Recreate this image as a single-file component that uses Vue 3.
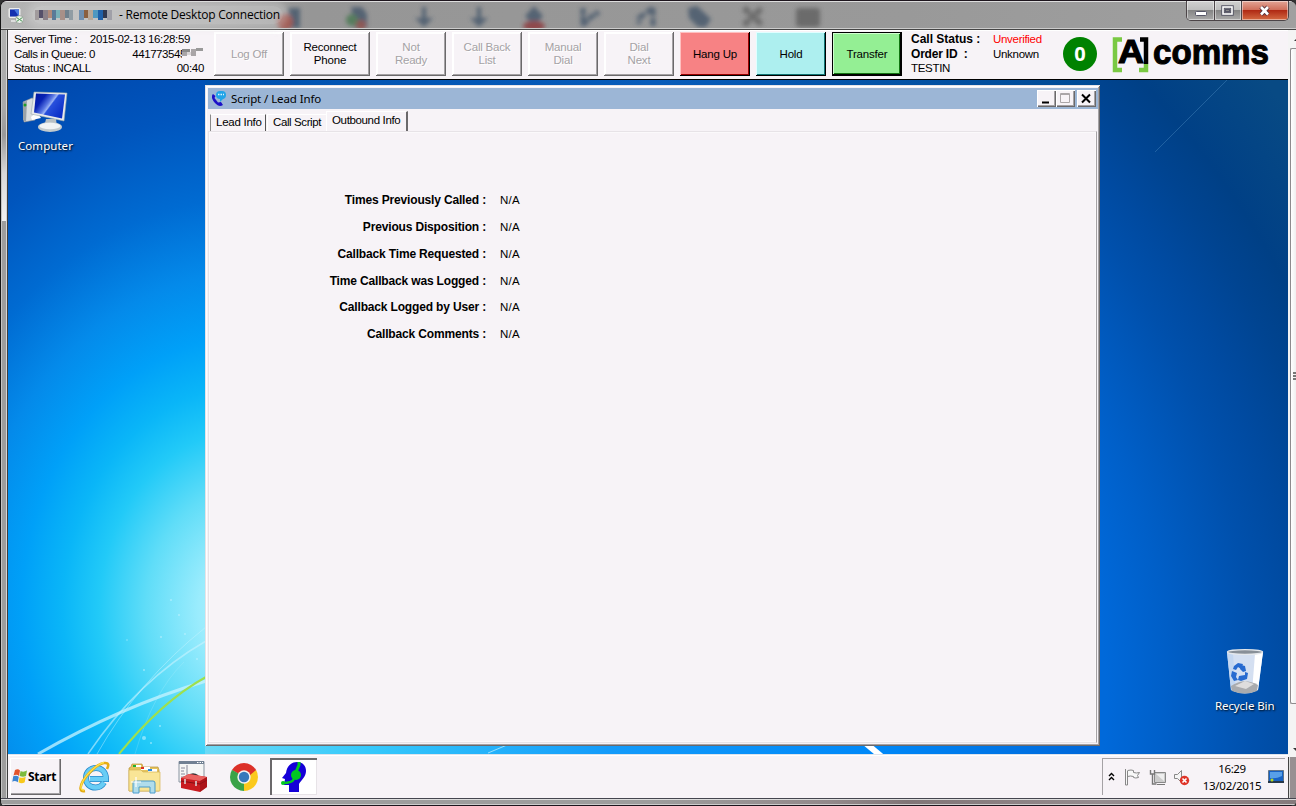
<script setup>
const buttons = [
  { lines: ['Log Off'], kind: 'off' },
  { lines: ['Reconnect', 'Phone'], kind: 'wide' },
  { lines: ['Not', 'Ready'], kind: 'off' },
  { lines: ['Call Back', 'List'], kind: 'off' },
  { lines: ['Manual', 'Dial'], kind: 'off' },
  { lines: ['Dial', 'Next'], kind: 'off' },
  { lines: ['Hang Up'], kind: 'red' },
  { lines: ['Hold'], kind: 'cyan' },
  { lines: ['Transfer'], kind: 'green' },
]
const rows = [
  'Times Previously Called :',
  'Previous Disposition :',
  'Callback Time Requested :',
  'Time Callback was Logged :',
  'Callback Logged by User :',
  'Callback Comments :',
]
const mosaicA = ['#a09a9c', '#55506a', '#8a8088', '#b08a7a', '#5a7a98', '#78b0b8', '#a89088', '#70808c', '#909ca4']
const mosaicB = ['#7090b0', '#8a6040', '#b8a898', '#5098c0', '#2060a8', '#303850', '#a0a0a8']
</script>

<template>
  <div class="frame">
    <header class="title">
      <svg class="blobs" width="1296" height="28" viewBox="0 0 1296 28">
        <defs><filter id="soft" x="-50%" y="-50%" width="200%" height="200%"><feGaussianBlur stdDeviation="2.2" /></filter></defs>
        <g filter="url(#soft)" fill="#45566a" stroke="none">
          <path d="M288 8h12v20h-10z" /><circle cx="285" cy="22" r="8" fill="#a04840" />
          <path d="M351 7h11l5 7v14h-12z" /><circle cx="352" cy="20" r="6" fill="#47774f" /><circle cx="361" cy="25" r="5" fill="#8c4a44" />
          <path d="M422 7h4v11h7l-9 9-9-9h7zM477 7h4v11h7l-9 9-9-9h7z" />
          <path d="M525 16l9-10 9 10-4 5h-10z" /><ellipse cx="534" cy="26" rx="11" ry="5" fill="#8c3438" />
          <g fill="none" stroke="#45566a" stroke-width="5"><path d="M583 8v18M583 25l8-8 8-5" stroke-dasharray="7 1" /><path d="M653 8l-14 10v6M653 8v18" stroke-dasharray="8 2" /></g>
          <path d="M688 8l9-2 14 13-5 8h-8l-9-9z" />
          <g fill="none" stroke="#606060" stroke-width="6"><path d="M744 8l18 17M744 25l18-17" stroke-dasharray="7 1" /></g>
          <rect x="796" y="8" width="24" height="19" rx="3" fill="#606060" />
        </g>
      </svg>
      <svg class="rdp" width="16" height="16" viewBox="0 0 16 16">
        <rect x="1" y="0.500" width="11" height="9" rx="1" fill="#ddd" stroke="#eee" /><rect x="2" y="1.500" width="9" height="7" fill="#1430b0" /><path d="M6 1.500h5v7z" fill="#4878e0" />
        <path d="M3 12h6v2H3z" fill="#ddd" /><circle cx="11.500" cy="11.500" r="4" fill="#e8f0e8" stroke="#777" stroke-width=".5" /><path d="M9 9.500l2 2-2 2M14 9.500l-2 2 2 2" fill="none" stroke="#187828" />
      </svg>
      <div class="glow">
        <span class="mosaic"><i v-for="(c, i) in mosaicA" :key="i" :style="{ background: c }" /></span>
        <span class="mosaic second"><i v-for="(c, i) in mosaicB" :key="i" :style="{ background: c }" /></span>
        <span class="caption">- Remote Desktop Connection</span>
      </div>
      <div class="aero">
        <div class="ab min"><svg width="14" height="8"><rect x="1.500" y="2.500" width="11" height="4" rx="1" fill="#fff" stroke="#555566" /></svg></div>
        <div class="ab max"><svg width="14" height="12"><rect x="2" y="2" width="9" height="7" fill="none" stroke="#555566" stroke-width="3.500" /><rect x="2" y="2" width="9" height="7" fill="none" stroke="#fff" stroke-width="1.600" /><rect x="4.500" y="4.500" width="4" height="2" fill="#888" stroke="#555566" /></svg></div>
        <div class="ab close"><svg width="14" height="12"><path d="M3 2l7 7.500M10 2L3 9.500" stroke="#55313a" stroke-width="4.500" /><path d="M3 2l7 7.500M10 2L3 9.500" stroke="#fff" stroke-width="2.600" /></svg></div>
      </div>
    </header>

    <div class="middle">
      <div class="edge"><div class="edge-light" /></div>
      <main class="screen">
        <section class="toolbar">
          <div class="server">
            <div class="line"><span class="t1">Server Time :</span><span class="stamp">2015-02-13 16:28:59</span></div>
            <div class="line"><span class="t2">Calls in Queue: 0</span><span class="phone">441773545<svg width="23" height="10" viewBox="0 0 23 10"><path d="M0 1h8v3H0z" fill="#8a8a8a" /><path d="M0 4h5v4H0zM9 1h5v7H9z" fill="#a9a5a7" /><path d="M14 0h7v3h-7z" fill="#999" /><path d="M5 4h4v3H5z" fill="#d9d5d7" /></svg></span></div>
            <div class="line"><span class="t3">Status : INCALL</span><span class="timer">00:40</span></div>
          </div>
          <div class="buttons">
            <button v-for="b in buttons" :key="b.lines[0]" class="btn" :class="b.kind"><span v-for="l in b.lines" :key="l">{{ l }}</span></button>
          </div>
          <div class="status">
            <div class="line"><b class="s1">Call Status :</b><span class="unverified">Unverified</span></div>
            <div class="line"><b class="s2">Order ID &nbsp;:</b><span>Unknown</span></div>
            <div class="line">TESTIN</div>
          </div>
          <div class="count">0</div>
          <svg class="logo" width="164" height="48" viewBox="0 -7 164 48">
            <path d="M9 2.500H2V33h7" fill="none" stroke="#7ac943" stroke-width="4.500" />
            <path d="M27 2.500h6V27" fill="none" stroke="#000" stroke-width="4.500" />
            <path d="M26 33h7V27" fill="none" stroke="#7ac943" stroke-width="4.500" />
            <text x="5" y="26" font-size="34" textLength="26" lengthAdjust="spacingAndGlyphs" stroke="#000" stroke-width="1.200">A</text>
            <text x="40" y="26.500" font-size="35" textLength="116" lengthAdjust="spacingAndGlyphs" stroke="#000" stroke-width="1.100">comms</text>
          </svg>
        </section>

        <section class="desktop">
          <svg class="wallpaper" width="1280" height="674" viewBox="0 0 1280 674">
            <defs>
              <radialGradient id="far" gradientUnits="userSpaceOnUse" cx="0" cy="0" r="1240" gradientTransform="translate(242 620) scale(1 .87)">
                <stop offset=".69" stop-color="#0069da" /><stop offset=".74" stop-color="#005fc8" /><stop offset=".81" stop-color="#0050ac" /><stop offset=".845" stop-color="#004aa0" /><stop offset=".885" stop-color="#004491" /><stop offset=".92" stop-color="#004086" /><stop offset="1" stop-color="#084a84" />
              </radialGradient>
              <radialGradient id="near" gradientUnits="userSpaceOnUse" cx="0" cy="0" r="520" gradientTransform="translate(242 530) scale(1 1.2)">
                <stop offset="0" stop-color="#b8f4ff" /><stop offset=".1" stop-color="#9aecfd" /><stop offset=".2" stop-color="#60ddf8" /><stop offset=".29" stop-color="#22caf8" /><stop offset=".36" stop-color="#0ab6f8" /><stop offset=".44" stop-color="#00a0f8" /><stop offset=".54" stop-color="#048aea" /><stop offset=".66" stop-color="#006bd2" /><stop offset=".8" stop-color="#0055bd" /><stop offset="1" stop-color="#0042a6" />
              </radialGradient>
              <linearGradient id="low"><stop offset="0" stop-color="#6bdaf6" /><stop offset=".18" stop-color="#36c9fb" /><stop offset=".45" stop-color="#149bfa" /><stop offset=".75" stop-color="#0088f8" /><stop offset="1" stop-color="#0066d8" /></linearGradient>
              <linearGradient id="high"><stop offset="0" stop-color="#0052b0" /><stop offset=".5" stop-color="#085cba" /><stop offset="1" stop-color="#004a94" /></linearGradient>
              <filter id="haze" x="-10%" y="-10%" width="120%" height="120%"><feGaussianBlur stdDeviation=".7" /></filter>
            </defs>
            <rect width="1280" height="674" fill="url(#far)" />
            <rect width="500" height="674" fill="url(#near)" />
            <rect x="197" width="895" height="6" fill="url(#high)" />
            <rect x="197" y="664" width="895" height="10" fill="url(#low)" />
            <g fill="none" stroke="#c9f4ff">
              <path d="M30 674Q112 627 198 601" stroke-width="3" filter="url(#haze)" opacity=".75" />
              <path d="M80 674Q130 600 198 561" stroke-width="1.500" opacity=".6" />
              <path d="M89 674Q130 601 198 547" stroke-width="1" opacity=".45" />
              <path d="M127 674Q145 612 176 582" stroke-width="1" opacity=".2" />
              <path d="M111 674Q154 621 198 597" stroke="#9ee04d" stroke-width="2" />
              <path d="M480 673l19-8" opacity=".7" />
              <path d="M855 661l18 15" stroke="#fff" stroke-width="6" filter="url(#haze)" />
              <path d="M1219 0l-72 72" stroke="#4080b8" opacity=".5" />
            </g>
            <g fill="#c5f3ff" opacity=".6"><circle cx="136" cy="590" r="1" /><circle cx="153" cy="557" r="1" /><circle cx="119" cy="560" r=".8" /><circle cx="136" cy="658" r="2" /><circle cx="152" cy="646" r="1" /><circle cx="143" cy="663" r="1" /><circle cx="189" cy="579" r="1" /><circle cx="177" cy="554" r="1" /><circle cx="171" cy="535" r="1" /><circle cx="163" cy="520" r="1" /></g>
          </svg>

          <div class="shortcut computer">
            <svg width="48" height="44" viewBox="0 0 48 44">
              <defs><linearGradient id="scr" x2="1" y2=".6"><stop offset="0" stop-color="#0018a0" /><stop offset=".3" stop-color="#0822b4" /><stop offset=".5" stop-color="#5a78e4" /><stop offset=".58" stop-color="#9cb4f4" /><stop offset=".62" stop-color="#2850dc" /><stop offset="1" stop-color="#0c30c8" /></linearGradient></defs>
              <path d="M2 11l9-4 6 3-3 19-11 2z" fill="#d9dde0" stroke="#999" stroke-width=".6" /><path d="M2 11l4-1-1 21-3-2z" fill="#9aa2a8" /><circle cx="4" cy="14" r="1.500" fill="#1c9c28" />
              <path d="M10 26l6-5 4 6-9 2z" fill="#fff" />
              <path d="M25 28h10l1 8H23z" fill="#b8c0c4" /><ellipse cx="29" cy="36" rx="12" ry="5" fill="#c2cacd" /><ellipse cx="29" cy="35" rx="10.500" ry="3.300" fill="#f0f3f4" />
              <path d="M13 1l33 1-3 28-33-7z" fill="#e8eaec" stroke="#9aa" stroke-width=".6" /><path d="M15 2.500l29 1-3 24-28-6z" fill="url(#scr)" />
            </svg>
            <span>Computer</span>
          </div>

          <div class="shortcut recycle">
            <svg width="38" height="48" viewBox="0 0 38 48">
              <path d="M1 4l4 38q14 7 27 0l5-38z" fill="#e4ebf6" fill-opacity=".93" /><path d="M1 4l4 38 5 2L7 6z" fill="#c3d7f1" /><path d="M29 6l-3 38 6-2 5-38z" fill="#fff" /><path d="M5 38q13-9 27-1l-1 6q-12 5-25 0z" fill="#a9abae" /><path d="M9 38l10-5 9 3-8 5z" fill="#dedddd" />
              <ellipse cx="19" cy="4" rx="17.500" ry="2.400" fill="#889098" stroke="#e4e8ec" stroke-width="1.400" />
              <g fill="#276bd0"><path d="M8 18l4-3 5 1-2 5-3-2-2 3-3-1z" /><path d="M6 23l5 2-1 4 2 3-4 1-3-5z" /><path d="M13 28l6-1v-3l3 1-1 6-6 2-3-1z" /><path d="M15 17l4 1 1 5-3 1-3-3z" /></g>
            </svg>
            <span>Recycle Bin</span>
          </div>

          <div class="window">
            <div class="wtitle">
              <svg width="18" height="18" viewBox="0 0 18 18"><rect x="6" y="1" width="10" height="8" rx="4" fill="#20a4e8" /><path d="M10 8v4l4-4z" fill="#20a4e8" /><path d="M8 4.500h6" stroke="#d8f4ff" stroke-width="1.500" stroke-dasharray="1.500 1" /><path d="M3 4c-2 2-1 6 2 9s5 4 8 2l-2-3-3 .5L4.500 8 5.500 6z" fill="#1c10c8" /></svg>
              <span>Script / Lead Info</span>
              <div class="wbtns">
                <i class="wb"><svg width="16" height="15"><path d="M5 12.500h7" stroke="#000" stroke-width="2" /></svg></i>
                <i class="wb"><svg width="16" height="15"><path d="M4.500 3.500h9v9h-9zM4 4.500h10" fill="none" stroke="#aaa6a8" /></svg></i>
                <i class="wb last"><svg width="18" height="15"><path d="M5 4.500l8 8M13 4.500l-8 8" stroke="#000" stroke-width="2" /></svg></i>
              </div>
            </div>
            <nav class="tabs"><span class="tab lead">Lead Info</span><span class="tab script">Call Script</span><span class="tab active">Outbound Info</span></nav>
            <div class="pane">
              <div v-for="r in rows" :key="r" class="row"><b>{{ r }}</b><span>N/A</span></div>
            </div>
          </div>
        </section>

        <footer class="taskbar">
          <div class="start">
            <svg width="16" height="15" viewBox="0 0 16 15"><path d="M3 1q3-1.500 5 .5L7 7Q5 5 1.500 6.500z" fill="#e2542c" /><path d="M8.600 2q3 1.500 6.400-.5L14 7q-3 1.500-6.400 0z" fill="#7cba3c" /><path d="M1.200 7.300q3-1.500 5.600.4l-1 5.500q-3-2-5.500-.5z" fill="#3c84d0" /><path d="M7.500 8.200q3 1.500 6.200-.4l-1 5.500q-3 2-6.200 0z" fill="#f8c81c" /></svg>
            <b>Start</b>
          </div>
          <div class="apps">
            <svg class="ie" width="32" height="32" viewBox="0 0 32 32">
              <path d="M25 21.500q-3 5-8.500 5c-6 0-9.500-4-9.500-9.500S11 7 17 7s10 4.500 10 11H11" fill="none" stroke="#2788ca" stroke-width="6" /><path d="M25 21.500q-3 5-8.500 5c-6 0-9.500-4-9.500-9.500S11 7 17 7s10 4.500 10 11H11" fill="none" stroke="#68cdf5" stroke-width="4.400" />
              <path d="M6 30c-5 1-6-3-2-10S18 3 25 2c5-.5 5 2 3 6" fill="none" stroke="#e5ac14" stroke-width="2.600" /><path d="M5 29c-4 0-4-4-.5-10S18 3 25 1.500" fill="none" stroke="#ffe14a" stroke-width="1.300" />
            </svg>
            <svg class="folder" width="33" height="32" viewBox="0 0 33 32">
              <path d="M3 5l1-3h10l1 3h15l1 3v21H1V6z" fill="#e5c35e" stroke="#b89438" stroke-width=".7" /><path d="M5 3h8v2H5z" fill="#fff" /><path d="M5 3h3v2H5z" fill="#20b030" /><path d="M13 5h9v3h-9z" fill="#fff" /><path d="M13 5h3v2h-3z" fill="#e03020" /><path d="M20 7h9v3h-9z" fill="#fff" /><path d="M20 7h4v2h-4z" fill="#2888e0" /><path d="M1 8h12l2 2h17v19H1z" fill="#f9e596" stroke="#d6b455" stroke-width=".7" />
              <path d="M5 31V21q0-2 2-2h18q2 0 2 2v10h-5v-6H11v6z" fill="#a7dcf4" fill-opacity=".9" stroke="#4a9bc8" /><path d="M8 15v10M3 20h10" stroke="#fff" stroke-width="1.200" />
            </svg>
            <svg class="tools" width="30" height="33" viewBox="0 0 30 33">
              <path d="M1 1.500h25V22H1z" fill="#f5f5f5" stroke="#8994a0" /><path d="M1 1h25v3H1z" fill="#718093" /><path d="M19 2.500h6" stroke="#fff" stroke-dasharray="1.500 1" /><path d="M3 8h4M3 11h3M3 14h4M3 17h3M9 5v12" stroke="#889" />
              <path d="M10 17q4-5 10-1" fill="none" stroke="#333" stroke-width="2" /><path d="M3 18l8-4 18 3v10l-7 5-19-4z" fill="#c91b20" /><path d="M3 18l8-4 18 3-7 4z" fill="#ea6260" /><path d="M3 21l19 3 7-4" fill="none" stroke="#851015" /><path d="M7 19v5M18 21v5" stroke="#ddd" stroke-width="1.500" /><path d="M22 21v11l7-5V17z" fill="#991016" opacity=".6" />
            </svg>
            <svg class="chrome" width="30" height="30" viewBox="0 0 30 30">
              <path d="M15 15L2.900 8A14 14 0 0 1 27.100 8z" fill="#dc3028" /><path d="M15 15L27.100 8A14 14 0 0 1 15 29z" fill="#fbc91c" /><path d="M15 15v14A14 14 0 0 1 2.900 8z" fill="#3ba348" /><path d="M15 8h12.100L20 14z" fill="#dc3028" /><path d="M20 15l-5 14 2-8z" fill="#fbc91c" /><path d="M2.900 8L9 18l3-5z" fill="#3ba348" /><circle cx="15" cy="15" r="6.700" fill="#f2f2f2" /><circle cx="15" cy="15" r="5.200" fill="#3678bb" />
            </svg>
            <div class="agent"><svg width="30" height="32" viewBox="0 0 30 32">
              <path d="M10 31v-7H5l1-6-3-1 4-5C8 5 12 1 18 1s9 4 9 9c0 6-5 9-7 13v8z" fill="#1500d8" /><path d="M20 1v3l-3 7" stroke="#00c820" stroke-width="3" fill="none" /><circle cx="17" cy="14" r="5" fill="#00c820" /><path d="M15 18q-2 4-11 4" stroke="#00c820" stroke-width="2.500" fill="none" /><circle cx="4" cy="22" r="2" fill="#00c820" />
            </svg></div>
          </div>
          <div class="tray">
            <svg class="chev" width="7" height="10"><path d="M1 4l2.500-2.500L6 4M1 8l2.500-2.500L6 8" stroke="#000" fill="none" stroke-width="1.400" /></svg>
            <svg class="flag" width="18" height="18"><path d="M1.500 1v16h2V3M3.500 2.500q4-1 6 0v2q3 1 6 0l-2 3 1 2q-3 1-5 0v-1q-3-1-6 0" fill="#f8f8f8" stroke="#888" /></svg>
            <svg class="net" width="18" height="17"><path d="M5.500 3.500h11v10h-11z" fill="#ccc" stroke="#888" /><path d="M7 5h8v7z" fill="#eee" /><path d="M8 15.500h8" stroke="#777" /><path d="M1.500 1v4h4V1M3.500 5v10h4" fill="none" stroke="#777" stroke-width="1.400" /></svg>
            <svg class="vol" width="18" height="17"><path d="M1.500 5.500h3l4-4v12l-4-4h-3z" fill="#f5f5f5" stroke="#888" /><circle cx="11.500" cy="11.500" r="4.700" fill="#df3428" /><path d="M9.500 9.500l4 4M13.500 9.500l-4 4" stroke="#fff" stroke-width="1.600" /></svg>
            <div class="clock"><span class="time">16:29</span><span class="date">13/02/2015</span></div>
            <svg class="mon" width="16" height="14"><path d="M.5.500h15v11H.5z" fill="#1762c4" stroke="#678" /><path d="M2 2h12v4q-6 3-12 2z" fill="#58a0e8" /><path d="M0 11h16v2H0z" fill="#283848" /><circle cx="4" cy="10" r="1.500" fill="#b8d820" /></svg>
          </div>
        </footer>
      </main>
      <aside class="scroll">
        <div class="up" /><div class="thumb"><i /><i /><i /></div><div class="down" /><div class="rest" />
      </aside>
    </div>
    <div class="bottom" />
  </div>
</template>

<style>
body { margin: 0; overflow: hidden; background: #333; }
</style>
<style scoped>
* { box-sizing: border-box; }
svg { display: block; flex: none; }
.frame { width: 1296px; height: 806px; display: flex; flex-direction: column; background: #9d9d9d; border-top: 1px solid #1d151d; border-left: 1px solid #151515; border-radius: 7px 7px 5px 5px; overflow: hidden; font: 11.5px/14px "Liberation Sans", Arial, sans-serif; letter-spacing: -.3px; color: #000; }
.title { height: 29px; position: relative; display: flex; border-top: 1px solid #ddd; border-bottom: 1px solid #454545; background: linear-gradient(90deg, #b4b4b4, #a8a8a8 15%, #969696 24%, #999 70%, #a0a0a0); box-shadow: inset 0 -1px #ccc; flex: none; }
.blobs { position: absolute; left: -1px; top: -2px; opacity: .8; }
.rdp { margin: 6px 0 0 7px; }
.glow { position: relative; display: flex; margin: 4px 0 4px 8px; padding: 0 3px; height: 18px; border-radius: 9px; align-items: center; background: rgba(225, 225, 225, .38); box-shadow: 0 0 7px 5px rgba(220, 220, 220, .35); }
.mosaic { display: flex; width: 38px; height: 10px; filter: blur(.4px); }
.mosaic i { flex: 1; }
.mosaic i:nth-child(even) { height: 8px; }
.second { margin-left: 6px; width: 33px; }
.caption { margin-left: 7px; font: 12px/18px "Open Sans", sans-serif; letter-spacing: -.22px; white-space: nowrap; }
.aero { position: relative; display: flex; margin-left: auto; margin-right: 7px; height: 20px; border: 1px solid #4c4548; border-top: 0; border-radius: 0 0 5px 5px; overflow: hidden; width: 103px; margin-top: -1px; }
.ab { display: flex; align-items: center; justify-content: center; background: linear-gradient(#d0d0d0, #bebebe 45%, #858585 50%, #aaa); box-shadow: inset 0 0 0 1px rgba(255, 255, 255, .45); border-right: 1px solid #4c4548; }
.min, .max { width: 28px; }
.min { padding-top: 4px; }
.max { width: 27px; }
.close { flex: 1; border: 0; background: linear-gradient(#e3a596, #d0705c 45%, #b02a14 50%, #d46a42); }
.middle { flex: 1; display: flex; min-height: 0; }
.edge { width: 7px; border-right: 1px solid #3d3d3d; background: #9d9d9d; box-shadow: inset 1px 0 #c4c4c4, inset -1px 0 #d5d5d5; flex: none; }
.edge-light { height: 191px; margin-right: 1px; margin-left: 1px; background: linear-gradient(#b0b0b0, #aaa 40%, #999 55%, #d8d8d8 75%, #f2f2f2); }
.screen { width: 1280px; display: flex; flex-direction: column; flex: none; }
.toolbar { height: 50px; display: flex; background: #f7f3f7; border-bottom: 1px solid #000; border-top: 1px solid #fff; flex: none; }
.server { width: 197px; margin: 1px 0 0 6px; }
.line { display: flex; height: 14.500px; align-items: center; white-space: nowrap; }
.stamp { margin-left: auto; margin-right: 14px; letter-spacing: -.35px; }
.phone, .timer { margin-left: auto; display: flex; }
.phone { letter-spacing: -.42px; }
.phone svg { margin-left: -4px; background: #f7f3f7; height: 10px; margin-top: 1px; }
.server .line { width: 190px; }
.server .line:nth-child(2) { width: 191px; }
.server .t1 { letter-spacing: -.4px; }
.server .t2 { letter-spacing: -.42px; }
.server .t3 { letter-spacing: -.38px; }
.buttons { display: flex; gap: 6px; margin: 1px 0 0 3px; }
.btn { width: 70px; height: 44px; padding: 0; border: 0; border-radius: 0; display: flex; flex-direction: column; align-items: center; justify-content: center; font: inherit; line-height: 13px; letter-spacing: -.2px; color: #000; background: #f7f3f7; box-shadow: inset -1px -1px #6b696b, inset 1px 1px #fff, inset -2px -2px #a5a2a5, inset 2px 2px #fff; }
.wide { width: 80px; }
.off { color: #a5a2a5; text-shadow: 1px 1px #fff; }
.red { background: #f78284; box-shadow: inset -1px -1px #000, inset 1px 1px #ffc0c0, inset -2px -2px #9c0000; }
.cyan { background: #adefef; box-shadow: inset -1px -1px #000, inset 1px 1px #e0ffff, inset -2px -2px #107474; }
.green { background: #94ef94; border: 1px solid #000; box-shadow: inset -1px -1px #000, inset 1px 1px #d0ffd0, inset -2px -2px #107410; }
.status { width: 150px; margin: 1px 0 0 9px; }
.status b { width: 82px; font-size: 12px; letter-spacing: 0; }
.status .s2 { letter-spacing: -.2px; }
.unverified { color: #f00; }
.count { width: 34px; height: 34px; margin: 6px 0 0 2px; border-radius: 50%; background: #008200; color: #fff; font: bold 20px/33px "Open Sans", sans-serif; text-align: center; flex: none; letter-spacing: 0; }
.logo { margin: -1px 0 0 16px; font-family: "Liberation Sans", Arial, sans-serif; font-weight: bold; letter-spacing: 0; overflow: visible; }
.desktop { height: 674px; position: relative; overflow: hidden; flex: none; }
.wallpaper { position: absolute; inset: 0; }
.shortcut { position: absolute; display: flex; flex-direction: column; align-items: center; color: #fff; font: 11.5px/14px "Noto Sans", sans-serif; letter-spacing: .05px; text-shadow: 1px 1px 2px #000; white-space: nowrap; }
.computer { left: 10px; top: 11px; gap: 4px; }
.recycle { left: 1207px; top: 568px; gap: 3px; letter-spacing: -.1px; }
.window { position: absolute; left: 197px; top: 5px; width: 895px; height: 661px; display: flex; flex-direction: column; background: #f7f3f7; padding: 3px 2px 3px 3px; box-shadow: inset 1px 1px #e7e3e7, inset -1px -1px #6b696b, inset 2px 2px #fff, inset -2px -2px #a5a2a5; }
.wtitle { height: 21px; display: flex; align-items: center; background: #9cb6d6; padding-left: 2px; flex: none; }
.wtitle > span { margin-left: 3px; font: 11.5px/20px "Noto Sans", sans-serif; letter-spacing: -.1px; }
.wbtns { display: flex; margin-left: auto; margin-right: 2px; }
.wb { width: 19px; height: 17px; background: #f7f3f7; box-shadow: inset 1px 1px #fff, inset -1px -1px #6b696b, inset -2px -2px #a5a2a5; }
.last { margin-left: 2px; }
.tabs { display: flex; height: 22px; padding-left: 2px; align-items: flex-end; flex: none; }
.tab { height: 17px; line-height: 15px; padding-left: 5px; white-space: nowrap; border-top: 1px solid #fff; border-left: 1px solid #fff; letter-spacing: -.25px; }
.lead { width: 56px; border-right: 1px solid #555; border-left-color: #888; }
.script { width: 59px; margin-left: 1px; letter-spacing: -.4px; }
.active { width: 82px; height: 20px; padding-left: 5px; line-height: 16px; border-right: 2px solid #6b696b; letter-spacing: -.35px; }
.pane { flex: 1; border: 1px solid #e7e3e7; border-right-color: #a5a2a5; box-shadow: inset 0 0 0 1px #fbf9fb; margin-right: 1px; padding-top: 55px; }
.row { height: 26.760px; display: flex; align-items: center; gap: 14px; }
.row b { width: 277px; text-align: right; font-size: 12px; letter-spacing: -.16px; }
.row span { letter-spacing: .2px; }
.taskbar { height: 44px; display: flex; background: #f7f3f7; box-shadow: inset 0 1px #dfe3ec, inset 0 2px #fff; flex: none; }
.start { width: 51px; height: 37px; margin: 4px 0 0 2px; display: flex; align-items: center; padding-left: 2px; background: #f7f3f7; box-shadow: inset 1px 1px #fff, inset -1px -1px #6b696b, inset -2px -2px #a5a2a5; }
.start b { margin-left: 0; font: bold 12px/16px "Noto Sans", sans-serif; letter-spacing: -.3px; }
.apps { display: flex; align-items: flex-start; }
.ie { margin: 7px 0 0 18px; }
.folder { margin: 8px 0 0 17px; }
.tools { margin: 6px 0 0 17px; }
.chrome { margin: 8px 0 0 21px; }
.agent { width: 47px; height: 37px; margin: 4px 0 0 11px; background: #fff; box-shadow: inset 2px 2px #6b696b, inset -1px -1px #e7e3e7; display: flex; align-items: center; justify-content: center; }
.tray { margin: 4px 3px 0 auto; width: 183px; height: 37px; border-top: 1px solid #a5a2a5; border-left: 1px solid #a5a2a5; display: flex; align-items: center; }
.chev { margin-left: 5px; }
.flag { margin-left: 9px; }
.net { margin-left: 7px; }
.vol { margin-left: 6px; }
.clock { width: 62px; margin-left: 10px; text-align: center; font: 11.5px/17px "Noto Sans", sans-serif; display: flex; flex-direction: column; letter-spacing: -.4px; }
.date { letter-spacing: -.25px; }
.mon { margin-left: 5px; }
.scroll { flex: 1; display: flex; flex-direction: column; background: #f4f4f4; }
.up { height: 18px; flex: none; }
.up::after { content: ""; display: block; margin: 8px 0 0 6px; border: 3px solid transparent; border-bottom-color: #333; border-top: 0; }
.thumb { height: 656px; border: 1px solid #8d8b8d; border-right: 0; border-radius: 2px; margin-left: 2px; background: linear-gradient(90deg, #fff, #e3e3e3); padding: 323px 0 0 2px; }
.thumb i { display: block; width: 5px; height: 2px; margin-bottom: 1px; background: #777; }
.down { height: 53px; flex: none; }
.down::after { content: ""; display: block; margin: 44px 0 0 5px; border: 3px solid transparent; border-top-color: #333; border-bottom: 0; }
.rest { flex: 1; border-left: 1px solid #444; border-right: 1px solid #151515; background: #979092; box-shadow: inset 1px 0 #ddd, inset -1px 0 #ddd; }
.bottom { height: 8px; flex: none; border-top: 1px solid #45454f; border-bottom: 1px solid #1d151d; box-shadow: inset 0 1px #ddd, inset 0 -1px #ccc; background: linear-gradient(90deg, #9d9d9d 50%, #93898b 64%, #817577 70%, #968c8f 85%, #857a7c); }
</style>
